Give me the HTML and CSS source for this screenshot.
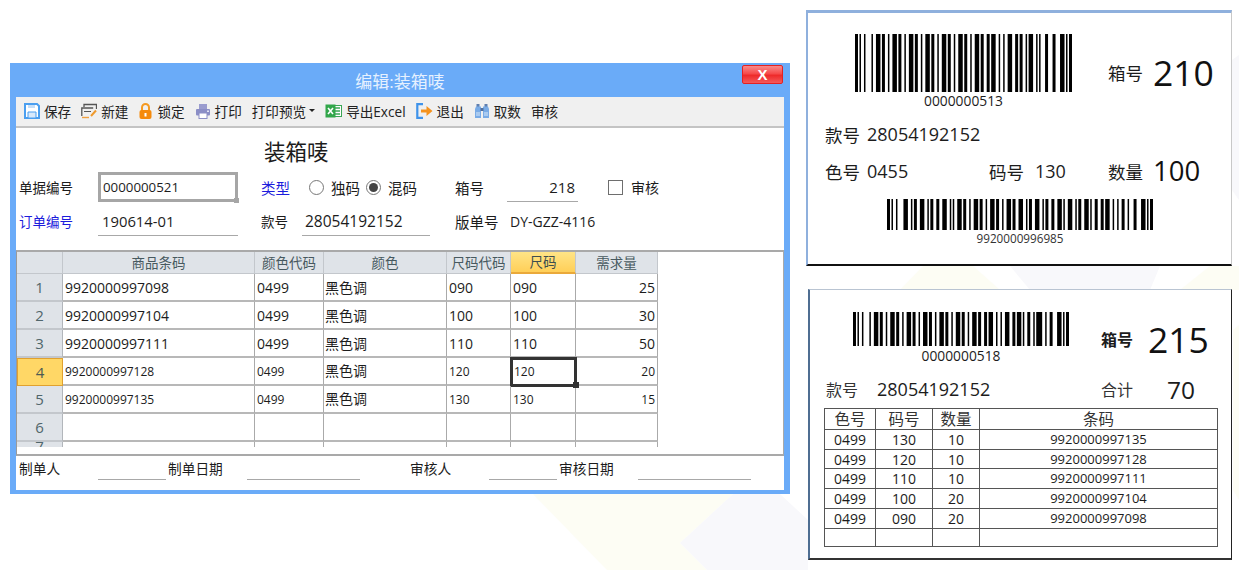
FILE: index.html
```html
<!DOCTYPE html>
<html lang="zh-CN">
<head>
<meta charset="utf-8">
<title>装箱唛</title>
<link rel="stylesheet" href="styles.css">
</head>
<body>
<svg class="backdrop" viewBox="0 0 1239 570" width="1239" height="570" aria-hidden="true">
  <polygon fill="#fdfdf4" points="533,494 733,494 680,543 707,570 607,570"/>
  <polygon fill="#f8f8fb" points="733,494 780,494 808,520 808,570 707,570 680,543"/>
  <polygon fill="#fdfdf4" points="923,266 973,266 1000,290 900,290"/>
  <polygon fill="#f8f8fb" points="1010,266 1160,266 1150,290 1030,290"/>
  <polygon fill="#fdfdf4" points="1180,290 1210,266 1239,266 1239,290"/>
  <polygon fill="#f8f8fb" points="1232,60 1239,55 1239,200 1232,190"/>
  <polygon fill="#fdfdf4" points="1233,330 1239,325 1239,500 1233,490"/>
</svg>

<section class="window">
  <header class="titlebar">
    <span class="titlebar-text">编辑:装箱唛</span>
    <span class="close">X</span>
  </header>
  <div class="client">
    <nav class="toolbar">
      <span class="tool">
        <svg class="ico" viewBox="0 0 16 16"><path d="M1 1h12l2 2v12H1z" fill="#fff" stroke="#4b9ff0" stroke-width="2"/><path d="M4 9h8v6H4z" fill="#d8e9fb" stroke="#4b9ff0"/><path d="M4 2h7v3H4z" fill="#c7dff8"/></svg>
        保存
      </span>
      <span class="tool">
        <svg class="ico" viewBox="0 0 16 16"><path d="M3 4V1.500h12.500V6" fill="none" stroke="#555" stroke-width="1.300"/><path d="M.8 13V5h11.400" fill="none" stroke="#555" stroke-width="1.300"/><path d="M3 8.500h7" stroke="#555"/><path d="M1 14.500h7" stroke="#f0a040" stroke-width="1.400"/><path d="M10 13l5-5.500" stroke="#ef9a2d" stroke-width="2"/></svg>
        新建
      </span>
      <span class="tool">
        <svg class="ico ico-narrow" viewBox="0 0 15 16"><path d="M4 8V4.500a3.500 3.500 0 0 1 7 0V8" fill="none" stroke="#f59a23" stroke-width="2"/><rect x="1.500" y="7" width="12" height="9" rx="2" fill="#f58a0b"/><rect x="6.500" y="10" width="2" height="3.500" fill="#fff"/></svg>
        锁定
      </span>
      <span class="tool">
        <svg class="ico" viewBox="0 0 16 16"><rect x="4" y="1" width="8" height="5" fill="#9a9ccf"/><rect x="1" y="6" width="14" height="6.500" rx="1" fill="#8b8ec6"/><rect x="4" y="10" width="8" height="5.500" fill="#fff" stroke="#8b8ec6"/><rect x="12" y="7.500" width="2" height="1.500" fill="#e4e5f5"/></svg>
        打印
      </span>
      <span class="tool tool-menu">打印预览<span class="caret"></span></span>
      <span class="tool">
        <svg class="ico ico-wide" viewBox="0 0 17 16"><rect x="8" y="2.500" width="8.500" height="11" fill="#fff" stroke="#3aa655"/><path d="M10 5h5M10 8h5M10 11h5" stroke="#3aa655" stroke-width="1.500"/><rect x=".500" y="1.500" width="10" height="13" fill="#31a64a"/><path d="M3 5l5 6M8 5l-5 6" stroke="#fff" stroke-width="1.600"/></svg>
        导出Excel
      </span>
      <span class="tool">
        <svg class="ico ico-wide" viewBox="0 0 17 16"><path d="M7 1.200H1.300v13.600H7" fill="none" stroke="#3f93ea" stroke-width="2.200"/><path d="M5 6.500h5.500V3l6 5-6 5V9.500H5z" fill="#f5931e"/></svg>
        退出
      </span>
      <span class="tool">
        <svg class="ico" viewBox="0 0 16 16"><path d="M2.500 1h3v3h-3zM10.500 1h3v3h-3z" fill="#5f7fb0"/><path d="M1 6l1-2.500h5V15H1zM15 6l-1-2.500H9V15h6z" fill="#79abe6"/><rect x="6.500" y="5" width="3" height="3" fill="#4f6f9f"/><rect x="2" y="9" width="4" height="4" fill="#a9caf0"/><rect x="10" y="9" width="4" height="4" fill="#a9caf0"/></svg>
        取数
      </span>
      <span class="tool">审核</span>
    </nav>

    <form class="sheet">
      <h1 class="sheet-title">装箱唛</h1>
      <div class="fields">
        <label class="lbl">单据编号</label>
        <div class="cell"><span class="input input-focus">0000000521<i class="input-grip"></i></span></div>
        <label class="lbl lbl-link lbl-wide">类型</label>
        <div class="cell radios">
          <span class="radio"></span><span class="radio-text">独码</span>
          <span class="radio radio-on"></span><span class="radio-text">混码</span>
        </div>
        <label class="lbl lbl-wide">箱号</label>
        <div class="cell"><span class="input input-line input-box-no">218</span></div>
        <div class="cell check"><span class="checkbox"></span><span>审核</span></div>

        <label class="lbl lbl-link">订单编号</label>
        <div class="cell"><span class="input input-line input-order">190614-01</span></div>
        <label class="lbl">款号</label>
        <div class="cell"><span class="input input-line input-style">28054192152</span></div>
        <label class="lbl lbl-wide">版单号</label>
        <div class="cell plate">DY-GZZ-4116</div>
      </div>
    </form>

    <div class="pane">
      <div class="grid-clip">
        <table class="grid">
          <colgroup><col class="c0"><col class="c1"><col class="c2"><col class="c3"><col class="c4"><col class="c5"><col class="c6"></colgroup>
          <thead>
            <tr><th></th><th>商品条码</th><th>颜色代码</th><th>颜色</th><th>尺码代码</th><th class="th-on">尺码</th><th>需求量</th></tr>
          </thead>
          <tbody>
            <tr><th class="rowh">1</th><td>9920000997098</td><td>0499</td><td class="cjk">黑色调</td><td>090</td><td>090</td><td class="num">25</td></tr>
            <tr><th class="rowh">2</th><td>9920000997104</td><td>0499</td><td class="cjk">黑色调</td><td>100</td><td>100</td><td class="num">30</td></tr>
            <tr><th class="rowh">3</th><td>9920000997111</td><td>0499</td><td class="cjk">黑色调</td><td>110</td><td>110</td><td class="num">50</td></tr>
            <tr class="small"><th class="rowh rowh-on">4</th><td>9920000997128</td><td>0499</td><td class="cjk">黑色调</td><td>120</td><td class="cell-on">120<i class="cell-grip"></i></td><td class="num">20</td></tr>
            <tr class="small"><th class="rowh">5</th><td>9920000997135</td><td>0499</td><td class="cjk">黑色调</td><td>130</td><td>130</td><td class="num">15</td></tr>
            <tr><th class="rowh">6</th><td></td><td></td><td></td><td></td><td></td><td></td></tr>
            <tr class="cut"><th class="rowh">7</th><td></td><td></td><td></td><td></td><td></td><td></td></tr>
          </tbody>
        </table>
      </div>
    </div>

    <footer class="signoff">
      <span>制单人</span><span class="sign-line sign-short"></span>
      <span>制单日期</span><span class="sign-line sign-long"></span>
      <span>审核人</span><span class="sign-line sign-short"></span>
      <span>审核日期</span><span class="sign-line sign-long"></span>
    </footer>
  </div>
</section>

<article class="label label-a">
  <div class="la-top">
    <div class="code code-a">
      <svg class="bars" viewBox="0 0 145 1" preserveAspectRatio="none" width="217" height="58"><line x1="0" y1=".5" x2="145" y2=".5" stroke="#000" stroke-width="1" stroke-dasharray="2 1 1 2 1 4 1 2 3 1 2 2 1 2 3 1 2 2 1 2 3 1 2 2 1 2 3 1 2 2 1 2 3 1 2 2 1 2 3 1 2 2 1 2 3 1 2 2 2 1 3 2 1 2 1 2 3 2 2 1 2 2 1 1 3 2 1 1 1 3 2 3 2 3 3 1 1 1 2"/></svg>
      <div class="code-text">0000000513</div>
    </div>
    <span class="la-key">箱号</span><span class="la-big">210</span>
  </div>
  <div class="la-style"><span>款号</span><span class="la-val">28054192152</span></div>
  <div class="la-meta">
    <div class="la-color"><span>色号</span><span class="la-val">0455</span></div>
    <div class="la-size"><span>码号</span><span class="la-val">130</span></div>
    <span class="la-key">数量</span><span class="la-qty">100</span>
  </div>
  <div class="code code-b">
    <svg class="bars" viewBox="0 0 178 1" preserveAspectRatio="none" width="266" height="31"><line x1="0" y1=".5" x2="178" y2=".5" stroke="#000" stroke-width="1" stroke-dasharray="2 1 1 2 1 4 3 2 1 1 2 2 3 2 1 1 2 2 2 2 3 2 1 1 1 2 3 1 2 2 1 2 3 1 2 2 1 2 3 1 2 2 1 2 3 1 2 2 3 2 1 1 2 2 3 2 1 1 2 2 2 2 3 1 1 2 3 2 1 1 2 2 3 1 1 2 2 2 2 1 3 2 1 2 1 2 2 2 1 3 2 3 3 1 1 1 2"/></svg>
    <div class="code-text code-text-sm">9920000996985</div>
  </div>
</article>

<article class="label label-b">
  <div class="lb-top">
    <div class="code code-c">
      <svg class="bars" viewBox="0 0 145 1" preserveAspectRatio="none" width="216" height="34"><line x1="0" y1=".5" x2="145" y2=".5" stroke="#000" stroke-width="1" stroke-dasharray="2 1 1 2 1 4 1 2 3 1 2 2 1 2 3 1 2 2 1 2 3 1 2 2 1 2 3 1 2 2 1 2 3 1 2 2 1 2 3 1 2 2 1 2 3 1 2 2 2 1 3 2 1 2 1 2 3 2 2 1 3 1 1 2 2 2 1 1 4 2 1 2 2 3 3 1 1 1 2"/></svg>
      <div class="code-text code-text-c">0000000518</div>
    </div>
    <span class="lb-key">箱号</span><span class="lb-big">215</span>
  </div>
  <div class="lb-info">
    <span class="lb-k1">款号</span><span class="lb-style">28054192152</span>
    <span class="lb-k2">合计</span><span class="lb-total">70</span>
  </div>
  <table class="detail">
    <colgroup><col class="d0"><col class="d1"><col class="d2"><col class="d3"></colgroup>
    <thead><tr><th>色号</th><th>码号</th><th>数量</th><th>条码</th></tr></thead>
    <tbody>
      <tr><td>0499</td><td>130</td><td>10</td><td>9920000997135</td></tr>
      <tr><td>0499</td><td>120</td><td>10</td><td>9920000997128</td></tr>
      <tr><td>0499</td><td>110</td><td>10</td><td>9920000997111</td></tr>
      <tr><td>0499</td><td>100</td><td>20</td><td>9920000997104</td></tr>
      <tr><td>0499</td><td>090</td><td>20</td><td>9920000997098</td></tr>
      <tr class="blank"><td></td><td></td><td></td><td></td></tr>
    </tbody>
  </table>
</article>
</body>
</html>
```

FILE: styles.css
```css
* { box-sizing: border-box; }

html, body { margin: 0; padding: 0; }

body {
  position: relative;
  width: 1239px;
  height: 570px;
  overflow: hidden;
  background: #fff;
  color: #1c1c1c;
  font-family: "Open Sans", "Noto Sans CJK SC", sans-serif;
  font-size: 14px;
}

.backdrop { position: absolute; left: 0; top: 0; }

/* main window */
.window {
  position: absolute;
  left: 10px;
  top: 63px;
  width: 780px;
  height: 431px;
  padding: 0 6px 4px;
  background: #6aabf8;
  display: flex;
  flex-direction: column;
}

.titlebar {
  position: relative;
  height: 34px;
  flex: none;
  display: flex;
  align-items: center;
  justify-content: center;
}

.titlebar-text { color: #e6f1ff; font-size: 17px; }

.close {
  position: absolute;
  right: 1px;
  top: 2px;
  width: 41px;
  height: 19px;
  border: 1px solid #e32222;
  border-radius: 2px;
  background: linear-gradient(#f98a8a, #f64a4a 45%, #ee2a2a 55%, #f55a5a);
  color: #fff;
  font: bold 15px/17px "Liberation Sans", sans-serif;
  text-align: center;
}

.client {
  flex: 1;
  background: #fff;
  display: flex;
  flex-direction: column;
  min-height: 0;
}

/* toolbar */
.toolbar {
  height: 31px;
  flex: none;
  padding: 0 0 2px 8px;
  background: #f0f0f0;
  border-bottom: 2px solid #c4c4c4;
  display: flex;
  align-items: center;
  gap: 10px;
  color: #222;
  font-size: 13.600px;
}

.tool { display: flex; align-items: center; gap: 4px; white-space: nowrap; }
.tool-menu { gap: 3px; }
.ico { width: 16px; height: 16px; flex: none; }
.ico-narrow { width: 15px; }
.ico-wide { width: 17px; }

.caret {
  width: 0;
  height: 0;
  border: 3px solid transparent;
  border-top: 3px solid #222;
  border-bottom: 0;
}

/* form */
.sheet { height: 122px; flex: none; }

.sheet-title {
  margin: 0;
  height: 44px;
  padding: 6px 0 0 248px;
  font-size: 21.500px;
  font-weight: 400;
  line-height: 36px;
}

.fields {
  display: grid;
  grid-template-columns: 79px 163px 41px 153px 52px 101px auto;
  grid-auto-rows: 30px;
  row-gap: 4px;
  padding-left: 3px;
  align-items: center;
}

.lbl { font-size: 13.500px; }
.lbl-wide { font-size: 14.500px; }
.lbl-link { color: #1c1cdc; }
.cell { height: 30px; display: flex; align-items: center; }

.input {
  position: relative;
  display: flex;
  align-items: center;
  height: 30px;
  width: 140px;
  padding-left: 4px;
}

.input-focus { border: 3px solid #a6a6a6; padding-left: 2px; font-size: 13.300px; }

.input-grip {
  position: absolute;
  right: -4px;
  bottom: -4px;
  width: 5px;
  height: 5px;
  background: #a6a6a6;
}

.input-line { border-bottom: 1px solid #a8a8a8; }
.input-order { font-size: 14.800px; }
.input-style { width: 128px; padding-left: 3px; font-size: 15.500px; }
.input-box-no { width: 71px; padding: 0 3px 0 0; justify-content: flex-end; font-size: 15px; }

.radios { padding-left: 7px; }
.radio {
  width: 15px;
  height: 15px;
  border: 1px solid #777;
  border-radius: 50%;
  background: #fff;
  flex: none;
  display: flex;
  align-items: center;
  justify-content: center;
}
.radio-on::after {
  content: "";
  width: 9px;
  height: 9px;
  border-radius: 50%;
  background: #444;
}
.radio-text { margin: 0 6px 0 7px; font-size: 14.500px; }

.check { gap: 8px; }
.checkbox { width: 15px; height: 15px; border: 1.500px solid #6e6e6e; flex: none; }
.plate { font-size: 14px; padding-left: 3px; }

/* data grid */
.pane {
  height: 206px;
  flex: none;
  border-top: 2px solid #a9a9a9;
  border-bottom: 2px solid #a9a9a9;
  border-right: 1px solid #a9a9a9;
  border-left: 1px solid #9a9a9a;
  overflow: hidden;
}

.grid-clip { height: 195px; overflow: hidden; }

.grid {
  width: 641px;
  table-layout: fixed;
  border-collapse: separate;
  border-spacing: 0;
}

.c0 { width: 46px; }
.c1 { width: 192px; }
.c2 { width: 69px; }
.c3 { width: 123px; }
.c4 { width: 64px; }
.c5 { width: 65px; }
.c6 { width: 82px; }

.grid th {
  padding: 0;
  background: #dfe3e8;
  border-right: 1px solid #c3c7cc;
  border-bottom: 1px solid #c3c7cc;
  color: #47595f;
  font-weight: 400;
  font-size: 13.500px;
  text-align: center;
}

.grid thead tr { height: 22px; }
.grid thead th { line-height: 20px; }
.grid tbody tr { height: 28px; }

.grid td {
  position: relative;
  padding: 0 2px;
  border-right: 1px solid #aaa;
  border-bottom: 2px solid #b8b8b8;
  font-size: 14px;
  color: #1c1c1c;
  white-space: nowrap;
  overflow: visible;
}

.grid .rowh { border-bottom: 2px solid #c3c7cc; border-right: 1px solid #b2b6bb; font-size: 15px; color: #50666b; }
.grid .rowh-on { background: #ffd766; border: 1px solid #e0a12f; color: #4d5a52; }
.grid .th-on {
  background: linear-gradient(#ffe486, #ffcf58);
  border-bottom: 2px solid #eaa93a;
  color: #3d4d4f;
}

.small td { font-size: 12px; }
.grid .cjk { font-size: 14px; padding-left: 1px; }
.grid .small .cjk { line-height: 18px; }
.grid .num { text-align: right; }

.grid .cell-on { outline: 3px solid #333; outline-offset: -2px; padding-left: 3px; }
.cell-grip {
  position: absolute;
  right: -4px;
  bottom: -4px;
  width: 6px;
  height: 6px;
  background: #333;
  z-index: 1;
}

.grid .cut th { vertical-align: top; line-height: 8px; }

/* sign-off line */
.signoff {
  display: grid;
  grid-template-columns: 79px 70px 79px 163px 79px 70px 79px 113px;
  height: 24px;
  padding-left: 3px;
  align-items: center;
  font-size: 13.700px;
}

.sign-line { display: block; height: 23px; border-bottom: 1px solid #a8a8a8; }
.sign-short { width: 68px; }
.sign-long { width: 113px; }

/* label A */
.label { position: absolute; background: #fff; color: #1c1c1c; }

.label-a {
  left: 806px;
  top: 10px;
  width: 426px;
  height: 256px;
  border-top: 3px solid #8fb0dd;
  border-left: 2px solid #8fb0dd;
  border-right: 1px solid #c8c8c8;
  border-bottom: 2px solid #111;
  padding: 21px 0 0 17px;
}

.code { display: flex; flex-direction: column; align-items: center; flex: none; }
.bars { display: block; }
.code-text { font-size: 13.800px; line-height: 18px; }
.code-text-c { line-height: 20px; }
.code-text-sm { font-size: 11.700px; line-height: 16px; color: #333; }
.code-a { width: 217px; }
.code-b { width: 266px; margin: 14px 0 0 62px; }
.code-c { width: 216px; }

.la-top { display: flex; align-items: center; margin-left: 30px; }
.la-top .code { margin-right: 36px; }
.la-key { width: 45px; font-size: 17.500px; flex: none; }
.la-big { font-size: 35.500px; line-height: 40px; color: #111; }
.la-qty { font-size: 27.500px; line-height: 28px; color: #111; }
.la-style { display: flex; gap: 7px; align-items: center; height: 24px; margin-top: 12px; font-size: 17.500px; }
.la-val { font-size: 18px; }
.la-meta { display: flex; align-items: center; height: 28px; margin-top: 11px; font-size: 17.500px; }
.la-color { width: 164px; display: flex; gap: 7px; }
.la-size { width: 119px; display: flex; gap: 11px; }

/* label B */
.label-b {
  left: 808px;
  top: 289px;
  width: 424px;
  height: 271px;
  border-top: 1px solid #b9c4d2;
  border-left: 2px solid #4f6e92;
  border-right: 1px solid #222;
  border-bottom: 2px solid #333;
  padding: 22px 0 0 16px;
}

.lb-top { display: flex; align-items: center; margin-left: 27px; }
.lb-top .code { margin-right: 32px; }
.lb-key { width: 47px; flex: none; font-size: 16px; font-weight: 700; }
.lb-big { font-size: 35.500px; line-height: 40px; color: #111; }

.lb-info { display: flex; align-items: center; height: 28px; margin-top: 9px; font-size: 16px; }
.lb-k1 { width: 51px; color: #333; }
.lb-style { width: 224px; font-size: 18px; }
.lb-k2 { width: 66px; color: #333; }
.lb-total { font-size: 24.500px; }

.detail {
  width: 394px;
  margin: 5px 0 0 -2px;
  table-layout: fixed;
  border-collapse: separate;
  border-spacing: 0;
  border-top: 1px solid #555;
  border-left: 1px solid #555;
}

.d0 { width: 51px; }
.d1 { width: 57px; }
.d2 { width: 47px; }
.d3 { width: 238px; }

.detail th, .detail td {
  padding: 0;
  border-right: 1px solid #555;
  border-bottom: 1px solid #555;
  text-align: center;
  font-weight: 400;
  color: #1c1c1c;
  line-height: 17px;
}

.detail th { font-size: 15.500px; color: #333; }
.detail td { font-size: 14px; }
.detail td:last-child { font-size: 13px; }
.detail thead tr { height: 21px; }
.detail tbody tr { height: 20px; }
.detail tbody tr:nth-child(2) { height: 19px; }
.detail .blank { height: 18px; }
```
